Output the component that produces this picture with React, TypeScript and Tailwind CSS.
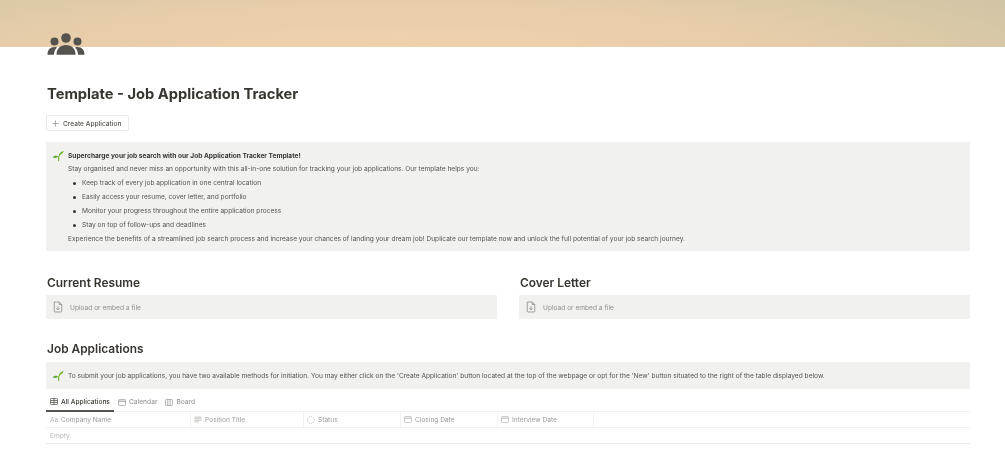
import { Plus } from "lucide-react";

function Sprout() {
  return (
    <svg viewBox="0 0 12 12" className="w-[12px] h-[12px] shrink-0">
      <path d="M6.6 11C6.4 8.5 6.8 5.5 8 3.8" stroke="#6fb52c" strokeWidth="1.1" fill="none" />
      <path d="M7 5C8 2.6 9.6 1.4 11.6 1C11.2 3 9.6 4.6 7 5Z" fill="#66b022" />
      <path d="M6.2 6.4C4.6 5.2 2.6 5.4 0.6 7.2C2.6 8.2 4.8 7.8 6.2 6.4Z" fill="#55a31c" />
    </svg>
  );
}

function People() {
  return (
    <svg viewBox="0 0 38 23" className="w-[38px] h-[23px]">
      <g fill="#55534e">
        <circle cx="19" cy="5" r="4.8" />
        <circle cx="7.5" cy="8.5" r="4" />
        <circle cx="30.5" cy="8.5" r="4" />
        <path d="M9.5 21.8C9.5 15.5 13.5 12 19 12C24.5 12 28.5 15.5 28.5 21.8Z" />
        <path d="M0.5 21.8C0.5 17 3 14 7.6 14C8.6 14 9.3 14.2 10 14.4C8 16.2 7 18.6 7 21.8Z" />
        <path d="M37.5 21.8C37.5 17 35 14 30.4 14C29.4 14 28.7 14.2 28 14.4C30 16.2 31 18.6 31 21.8Z" />
      </g>
    </svg>
  );
}

function FileIcon() {
  return (
    <svg viewBox="0 0 12 14" className="w-[10px] h-[12px] shrink-0" fill="none" stroke="#8f8e8a" strokeWidth="1">
      <path d="M1.5 1H7.5L10.5 4V12C10.5 12.6 10.1 13 9.5 13H2.5C1.9 13 1.5 12.6 1.5 12Z" />
      <path d="M7.5 1V4H10.5" />
      <path d="M6 6V10.5M4 8.5L6 10.5L8 8.5" />
    </svg>
  );
}

function TableIcon({ color }: { color: string }) {
  return (
    <svg viewBox="0 0 12 10" className="w-[8px] h-[7px] shrink-0" fill="none" stroke={color} strokeWidth="1.2">
      <rect x="0.6" y="0.6" width="10.8" height="8.8" rx="1.4" />
      <path d="M0.6 3.6H11.4M0.6 6.4H11.4M6 0.6V9.4" />
    </svg>
  );
}

function CalendarIcon({ color }: { color: string }) {
  return (
    <svg viewBox="0 0 12 11" className="w-[8px] h-[7px] shrink-0" fill="none" stroke={color} strokeWidth="1.2">
      <rect x="0.6" y="0.6" width="10.8" height="9.8" rx="1.4" />
      <path d="M0.6 3.4H11.4" strokeWidth="1.6" />
    </svg>
  );
}

function BoardIcon({ color }: { color: string }) {
  return (
    <svg viewBox="0 0 12 10" className="w-[8px] h-[7px] shrink-0" fill="none" stroke={color} strokeWidth="1.2">
      <rect x="0.6" y="0.6" width="10.8" height="8.8" rx="1.4" />
      <path d="M4.2 0.6V9.4M7.8 0.6V9.4" />
    </svg>
  );
}

function TextIcon() {
  return (
    <svg viewBox="0 0 10 8" className="w-[8px] h-[7px] shrink-0" fill="none" stroke="#b7b6b3" strokeWidth="1">
      <path d="M0.5 1H9.5M0.5 3H9.5M0.5 5H9.5M0.5 7H6" />
    </svg>
  );
}

function StatusIcon() {
  return (
    <svg viewBox="0 0 10 10" className="w-[8px] h-[8px] shrink-0" fill="none" stroke="#b7b6b3" strokeWidth="1" strokeDasharray="1.4 1.1">
      <circle cx="5" cy="5" r="4.3" />
    </svg>
  );
}

const bullets = [
  "Keep track of every job application in one central location",
  "Easily access your resume, cover letter, and portfolio",
  "Monitor your progress throughout the entire application process",
  "Stay on top of follow-ups and deadlines",
];

const columns = [
  { name: "Company Name", box: "w-[145px] pl-[4px]", icon: <span className="text-[#b7b6b3] w-[8px]">Aa</span> },
  { name: "Position Title", box: "w-[113px] pl-[3px]", icon: <TextIcon /> },
  { name: "Status", box: "w-[97px] pl-[3px]", icon: <StatusIcon /> },
  { name: "Closing Date", box: "w-[97px] pl-[3px]", icon: <CalendarIcon color="#b7b6b3" /> },
  { name: "Interview Date", box: "w-[96px] pl-[3px]", icon: <CalendarIcon color="#b7b6b3" /> },
];

function FileColumn({ title, width }: { title: string; width: string }) {
  return (
    <div className={width}>
      <h2 className="text-[11.9px] leading-[16px] font-semibold text-[#37352f] pl-px">{title}</h2>
      <div className="mt-[4px] h-[24px] bg-[#f1f1ef] flex items-center gap-[7px] pl-[7px] text-[6.6px] leading-[10px] text-[#8f8e8a]">
        <FileIcon />
        <span className="mt-[2px]">Upload or embed a file</span>
      </div>
    </div>
  );
}

export default function App() {
  return (
    <div className="w-[1005px] h-[463px] overflow-hidden bg-white font-['Inter',sans-serif] text-[#37352f] blur-[0.45px]">
      <div className="h-[47px] bg-[radial-gradient(ellipse_70%_200%_at_40%_110%,#f2d2ae,#e6cdaa_55%,#d0c5a5)]" />

      <div className="pl-[46px] w-[970px]">
        <div className="-mt-[14px] pl-px">
          <People />
        </div>

        <h1 className="mt-[27px] text-[14.7px] leading-[23px] font-bold pl-px">Template - Job Application Tracker</h1>

        <button className="mt-[9px] h-[16px] w-[83px] border border-[#e9e9e7] rounded-[2px] flex items-center gap-[3px] pl-[4px] text-[6.6px] leading-[10px] font-medium text-[#55534e]">
          <Plus className="w-[9px] h-[9px] text-[#8f8e8a]" />
          <span className="mt-[2px]">Create Application</span>
        </button>

        <div className="mt-[11px] h-[109px] bg-[#f1f1ef] flex gap-[4px] pl-[6px] pt-[8px]">
          <Sprout />
          <div className="text-[6.6px] leading-[10px] text-[#55534e]">
            <p className="font-bold text-[#37352f] mt-px">Supercharge your job search with our Job Application Tracker Template!</p>
            <p className="mt-[3px]">
              Stay organised and never miss an opportunity with this all-in-one solution for tracking your job applications. Our template helps you:
            </p>
            <ul className="mt-[4px] flex flex-col gap-[4px]">
              {bullets.map((b) => (
                <li key={b} className="flex items-center h-[10px]">
                  <span className="w-[3px] h-[3px] rounded-full bg-[#37352f] ml-[5px] mr-[6px]" />
                  {b}
                </li>
              ))}
            </ul>
            <p className="mt-[4px]">
              Experience the benefits of a streamlined job search process and increase your chances of landing your dream job! Duplicate our template now and unlock the full potential of your job search journey.
            </p>
          </div>
        </div>

        <div className="mt-[24px] flex justify-between">
          <FileColumn title="Current Resume" width="w-[451px]" />
          <FileColumn title="Cover Letter" width="w-[451px]" />
        </div>

        <h2 className="mt-[22px] text-[11.9px] leading-[16px] font-semibold pl-px">Job Applications</h2>

        <div className="mt-[5px] h-[27px] bg-[#f1f1ef] flex items-center gap-[4px] pl-[6px] text-[6.6px] leading-[10px] text-[#55534e]">
          <Sprout />
          <span>
            To submit your job applications, you have two available methods for initiation. You may either click on the 'Create Application' button located at the top of the webpage or opt for the 'New' button situated to the right of the table displayed below.
          </span>
        </div>

        <div className="mt-[3px] h-[20px] flex border-b border-[#f1f1ef] text-[6.6px] leading-[10px] font-medium text-[#9b9a97]">
          <div className="h-[20px] w-[68px] border-b-2 border-[#55534e] pl-[4px] pt-[1px] mr-[4px] flex items-center gap-[3px] text-[#37352f]">
            <TableIcon color="#55534e" />
            All Applications
          </div>
          <div className="pt-[1px] flex items-center gap-[3px] mr-[8px]">
            <CalendarIcon color="#9b9a97" />
            Calendar
          </div>
          <div className="pt-[1px] flex items-center gap-[3px]">
            <BoardIcon color="#9b9a97" />
            Board
          </div>
        </div>

        <div className="h-[16px] flex border-b border-[#f1f1ef] text-[6.6px] leading-[10px] text-[#9b9a97]">
          {columns.map((c) => (
            <div key={c.name} className={`${c.box} shrink-0 flex items-center gap-[3px] border-r border-[#f1f1ef]`}>
              {c.icon}
              {c.name}
            </div>
          ))}
        </div>

        <div className="h-[16px] flex items-center pl-[4px] border-b border-[#e9e9e7] text-[6.6px] leading-[10px] text-[#b7b6b3]">Empty.</div>
      </div>
    </div>
  );
}
